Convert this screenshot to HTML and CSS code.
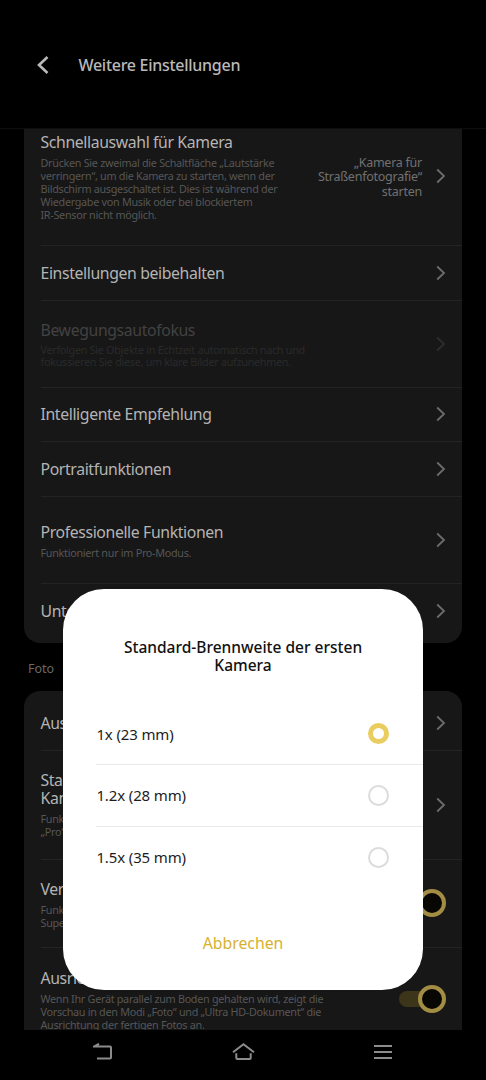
FILE: index.html
```html
<!DOCTYPE html>
<html lang="de">
  <head>
    <meta charset="UTF-8" />
    <meta name="viewport" content="width=device-width, initial-scale=1.0" />
    <title>Weitere Einstellungen</title>
    <link rel="stylesheet" href="styles.css">
  </head>
  <body>
    <svg class="defs">
      <symbol id="chevron" viewBox="0 0 10 16">
        <path d="M1.2 1.5 L8 8 L1.2 14.5" fill="none" stroke="currentColor" stroke-width="1.8" />
      </symbol>
    </svg>
    <div class="phone">
      <header class="header">
        <svg class="back" viewBox="0 0 12 18">
          <path d="M10.5 1 L2 9 L10.5 17" fill="none" stroke="currentColor" stroke-width="2.6" />
        </svg>
        <h1 class="title">Weitere Einstellungen</h1>
      </header>

      <main class="list">
        <section class="card card-scrolled">
          <div class="row row-xl">
            <div class="text">
              <div class="name">Schnellauswahl für Kamera</div>
              <div class="desc">Drücken Sie zweimal die Schaltfläche „Lautstärke<br>verringern“, um die Kamera zu starten, wenn der<br>Bildschirm ausgeschaltet ist. Dies ist während der<br>Wiedergabe von Musik oder bei blockiertem<br>IR-Sensor nicht möglich.</div>
            </div>
            <div class="value">„Kamera für<br>Straßenfotografie“<br>starten</div>
            <svg class="chevron"><use href="#chevron" /></svg>
          </div>
          <div class="row">
            <div class="text"><div class="name">Einstellungen beibehalten</div></div>
            <svg class="chevron"><use href="#chevron" /></svg>
          </div>
          <div class="row row-m disabled">
            <div class="text">
              <div class="name">Bewegungsautofokus</div>
              <div class="desc desc-tight">Verfolgen Sie Objekte in Echtzeit automatisch nach und<br>fokussieren Sie diese, um klare Bilder aufzunehmen.</div>
            </div>
            <svg class="chevron"><use href="#chevron" /></svg>
          </div>
          <div class="row">
            <div class="text"><div class="name">Intelligente Empfehlung</div></div>
            <svg class="chevron"><use href="#chevron" /></svg>
          </div>
          <div class="row">
            <div class="text"><div class="name">Portraitfunktionen</div></div>
            <svg class="chevron"><use href="#chevron" /></svg>
          </div>
          <div class="row row-m">
            <div class="text">
              <div class="name">Professionelle Funktionen</div>
              <div class="desc">Funktioniert nur im Pro-Modus.</div>
            </div>
            <svg class="chevron"><use href="#chevron" /></svg>
          </div>
          <div class="row row-last">
            <div class="text"><div class="name">Unterstützung</div></div>
            <svg class="chevron"><use href="#chevron" /></svg>
          </div>
        </section>

        <h2 class="group">Foto</h2>

        <section class="card">
          <div class="row row-first">
            <div class="text"><div class="name">Auslöser</div></div>
            <svg class="chevron"><use href="#chevron" /></svg>
          </div>
          <div class="row row-l">
            <div class="text">
              <div class="name name-wrap">Standard<br>Kamera</div>
              <div class="desc desc-loose">Funktion<br>„Pro“</div>
            </div>
            <svg class="chevron"><use href="#chevron" /></svg>
          </div>
          <div class="row row-m2">
            <div class="text">
              <div class="name">Verzerrung</div>
              <div class="desc">Funktion<br>Super</div>
            </div>
            <div class="switch"><span class="track"></span><span class="knob"></span></div>
          </div>
          <div class="row row-end">
            <div class="text">
              <div class="name">Ausrichtung</div>
              <div class="desc">Wenn Ihr Gerät parallel zum Boden gehalten wird, zeigt die<br>Vorschau in den Modi „Foto“ und „Ultra HD-Dokument“ die<br>Ausrichtung der fertigen Fotos an.</div>
            </div>
            <div class="switch"><span class="track"></span><span class="knob"></span></div>
          </div>
        </section>
      </main>

      <nav class="nav">
        <svg width="20" height="18" viewBox="0 0 20 18">
          <path d="M6 0.8 L1 3.6 H17 Q18 3.6 18 4.6 V14.5 Q18 15.5 17 15.5 H4" />
        </svg>
        <svg width="24" height="18" viewBox="0 0 24 18">
          <path d="M1 9.3 L11.5 1.3 L22 9.3 M4.3 10.3 V15 Q4.3 16 5.3 16 H17.7 Q18.7 16 18.7 15 V10.3" />
        </svg>
        <svg width="18" height="18" viewBox="0 0 18 18">
          <path d="M0 3 H18 M0 9 H18 M0 15 H18" />
        </svg>
      </nav>

      <div class="dialog">
        <h3 class="dialog-title">Standard-Brennweite der ersten<br>Kamera</h3>
        <div class="options">
          <div class="option"><span>1x (23 mm)</span><span class="radio checked"></span></div>
          <div class="option"><span>1.2x (28 mm)</span><span class="radio"></span></div>
          <div class="option"><span>1.5x (35 mm)</span><span class="radio"></span></div>
        </div>
        <div class="cancel">Abbrechen</div>
      </div>
    </div>
  </body>
</html>
```

FILE: styles.css
```css
* {
  box-sizing: border-box;
}
body {
  margin: 0;
  background: #000;
  font-family: "Noto Sans", sans-serif;
}
h1,
h2,
h3 {
  margin: 0;
}
.defs {
  display: none;
}
.phone {
  width: 486px;
  height: 1080px;
  display: flex;
  flex-direction: column;
  position: relative;
  overflow: hidden;
  background: #000;
}
.header {
  height: 129px;
  flex: none;
  display: flex;
  align-items: center;
  padding: 2px 0 0 37px;
  border-bottom: 1px solid #0e0e0e;
  color: #b9b9b9;
}
.back {
  width: 12px;
  height: 18px;
  margin-right: 29.5px;
}
.title {
  font-size: 16px;
  line-height: 22px;
  font-weight: 500;
  letter-spacing: -0.28px;
}
.list {
  flex: 1;
  min-height: 0;
  overflow: hidden;
  padding: 0 24px;
}
.card {
  background: #171717;
  border-radius: 16px;
}
.card-scrolled {
  margin-top: -22px;
}
.row {
  height: 54.5px;
  margin-left: 16.5px;
  padding-right: 16px;
  display: flex;
  align-items: center;
  border-bottom: 1px solid #232323;
}
.row-xl {
  height: 139px;
}
.row-l {
  height: 109px;
}
.row-m {
  height: 87px;
}
.row-m2 {
  height: 88px;
}
.row-first {
  height: 60px;
  padding-top: 5px;
}
.row-last {
  height: 59px;
  padding-bottom: 5px;
  border-bottom: none;
}
.row-end {
  height: 102px;
  border-bottom: none;
}
.text {
  flex: 1;
  white-space: nowrap;
}
.name {
  font-size: 15.8px;
  line-height: 22px;
  letter-spacing: -0.38px;
  color: #b4b4b4;
}
.name-wrap {
  line-height: 18px;
}
.desc {
  margin-top: 3px;
  font-size: 10.8px;
  line-height: 13px;
  letter-spacing: -0.29px;
  color: #565656;
}
.desc-tight {
  line-height: 12px;
}
.desc-loose {
  margin-top: 5px;
}
.value {
  margin: 3px 14px 0 0;
  font-size: 12.5px;
  line-height: 14.4px;
  letter-spacing: -0.25px;
  text-align: right;
  white-space: nowrap;
  color: #717171;
}
.chevron {
  width: 10px;
  height: 16px;
  color: #6c6c6c;
}
.disabled .name {
  color: #424242;
}
.disabled .desc {
  color: #2a2a2a;
}
.disabled .chevron {
  color: #2e2e2e;
}
.group {
  height: 48px;
  padding-left: 4px;
  font-size: 12.5px;
  line-height: 52px;
  font-weight: 400;
  color: #696969;
}
.switch {
  width: 47px;
  height: 28px;
  display: flex;
  align-items: center;
}
.track {
  width: 34px;
  height: 16px;
  border-radius: 8px;
  background: #3d3519;
}
.knob {
  width: 28px;
  height: 28px;
  flex: none;
  margin-left: -15px;
  border: 4px solid #a38d44;
  border-radius: 50%;
  background: #090703;
}
.nav {
  height: 50px;
  flex: none;
  display: flex;
  justify-content: space-between;
  align-items: center;
  padding: 0 94px 6px 93px;
}
.nav svg {
  fill: none;
  stroke: #8c8c8c;
  stroke-width: 2;
}
.dialog {
  position: absolute;
  left: 63.4px;
  top: 588.5px;
  width: 359.3px;
  height: 401.5px;
  border-radius: 41px;
  background: #fff;
  color: #1d1d1d;
  overflow: hidden;
}
.dialog-title {
  padding-top: 49px;
  font-size: 15.5px;
  line-height: 18px;
  font-weight: 500;
  text-align: center;
  color: #111;
}
.options {
  margin-top: 30px;
  padding-left: 33px;
}
.option {
  height: 61.5px;
  display: flex;
  align-items: center;
  justify-content: space-between;
  padding-right: 34px;
  border-bottom: 1px solid #e9e9e9;
  font-size: 15px;
  letter-spacing: -0.13px;
}
.option:last-child {
  border-bottom: none;
}
.radio {
  width: 21px;
  height: 21px;
  border: 2px solid #dcdcdc;
  border-radius: 50%;
}
.radio.checked {
  border: 5px solid #eacd5f;
}
.cancel {
  margin-top: 44px;
  font-size: 15.8px;
  line-height: 22px;
  text-align: center;
  color: #d6b130;
}
```
